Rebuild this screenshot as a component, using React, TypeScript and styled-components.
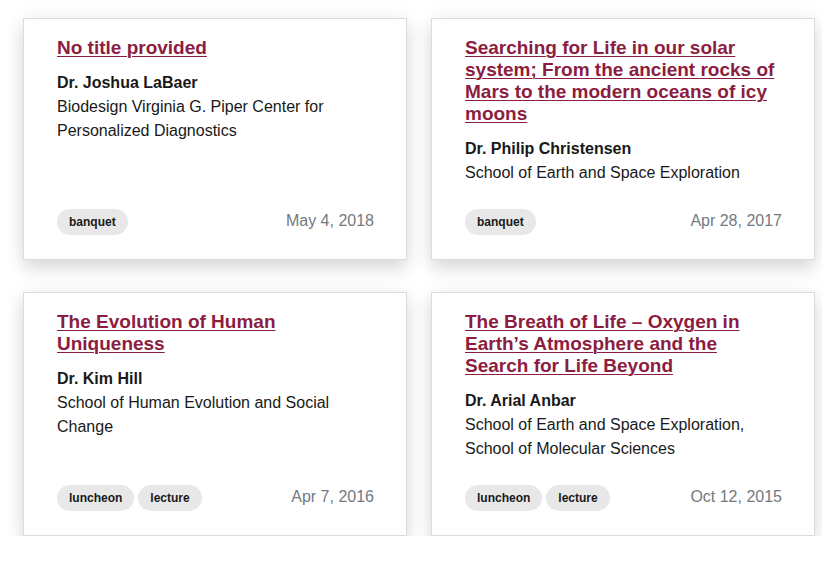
import React from "react";
import styled, { createGlobalStyle } from "styled-components";

const GlobalStyle = createGlobalStyle`
  html, body {
    margin: 0;
    padding: 0;
    background: #ffffff;
  }
  body {
    font-family: "Liberation Sans", Arial, sans-serif;
    color: #191919;
  }
`;

const Grid = styled.div`
  display: grid;
  grid-template-columns: 384px 384px;
  column-gap: 24px;
  row-gap: 32px;
  padding: 18px 0 0 23px;
`;

const Card = styled.article`
  display: flex;
  flex-direction: column;
  background: #ffffff;
  border: 1px solid #dcdcdc;
  box-shadow: 0 0 22px rgba(0, 0, 0, 0.06), 0 9px 16px rgba(0, 0, 0, 0.12);
  padding: 18px 32px 24px 33px;
`;

const Title = styled.a`
  display: block;
  margin: 0 0 12px 0;
  font-size: 19px;
  line-height: 22px;
  font-weight: 700;
  color: #8c1d40;
  text-decoration: underline;
  text-decoration-thickness: 1px;
  text-underline-offset: 2px;
  cursor: pointer;
`;

const Speaker = styled.div`
  font-size: 16px;
  line-height: 24px;
  font-weight: 700;
  color: #191919;
`;

const Affiliation = styled.div`
  font-size: 16px;
  line-height: 24px;
  color: #191919;
`;

const Footer = styled.div`
  margin-top: auto;
  padding-top: 24px;
  display: flex;
  justify-content: space-between;
  align-items: flex-start;
`;

const Tags = styled.div`
  display: flex;
  gap: 4px;
`;

const Tag = styled.span`
  display: inline-block;
  background: #e8e8e8;
  color: #191919;
  font-size: 12px;
  line-height: 18px;
  font-weight: 700;
  padding: 4px 12px;
  border-radius: 13px;
`;

const DateText = styled.span`
  font-size: 16px;
  line-height: 24px;
  color: #747a80;
`;

type Event = {
  title: string;
  speaker: string;
  affiliation: string;
  tags: string[];
  date: string;
};

const events: Event[] = [
  {
    title: "No title provided",
    speaker: "Dr. Joshua LaBaer",
    affiliation: "Biodesign Virginia G. Piper Center for Personalized Diagnostics",
    tags: ["banquet"],
    date: "May 4, 2018",
  },
  {
    title:
      "Searching for Life in our solar system; From the ancient rocks of Mars to the modern oceans of icy moons",
    speaker: "Dr. Philip Christensen",
    affiliation: "School of Earth and Space Exploration",
    tags: ["banquet"],
    date: "Apr 28, 2017",
  },
  {
    title: "The Evolution of Human Uniqueness",
    speaker: "Dr. Kim Hill",
    affiliation: "School of Human Evolution and Social Change",
    tags: ["luncheon", "lecture"],
    date: "Apr 7, 2016",
  },
  {
    title:
      "The Breath of Life \u2013 Oxygen in Earth\u2019s Atmosphere and the Search for Life Beyond",
    speaker: "Dr. Arial Anbar",
    affiliation: "School of Earth and Space Exploration, School of Molecular Sciences",
    tags: ["luncheon", "lecture"],
    date: "Oct 12, 2015",
  },
];

export default function App() {
  return (
    <>
      <GlobalStyle />
      <Grid>
        {events.map((e) => (
          <Card key={e.title}>
            <Title>{e.title}</Title>
            <Speaker>{e.speaker}</Speaker>
            <Affiliation>{e.affiliation}</Affiliation>
            <Footer>
              <Tags>
                {e.tags.map((t) => (
                  <Tag key={t}>{t}</Tag>
                ))}
              </Tags>
              <DateText>{e.date}</DateText>
            </Footer>
          </Card>
        ))}
      </Grid>
    </>
  );
}
